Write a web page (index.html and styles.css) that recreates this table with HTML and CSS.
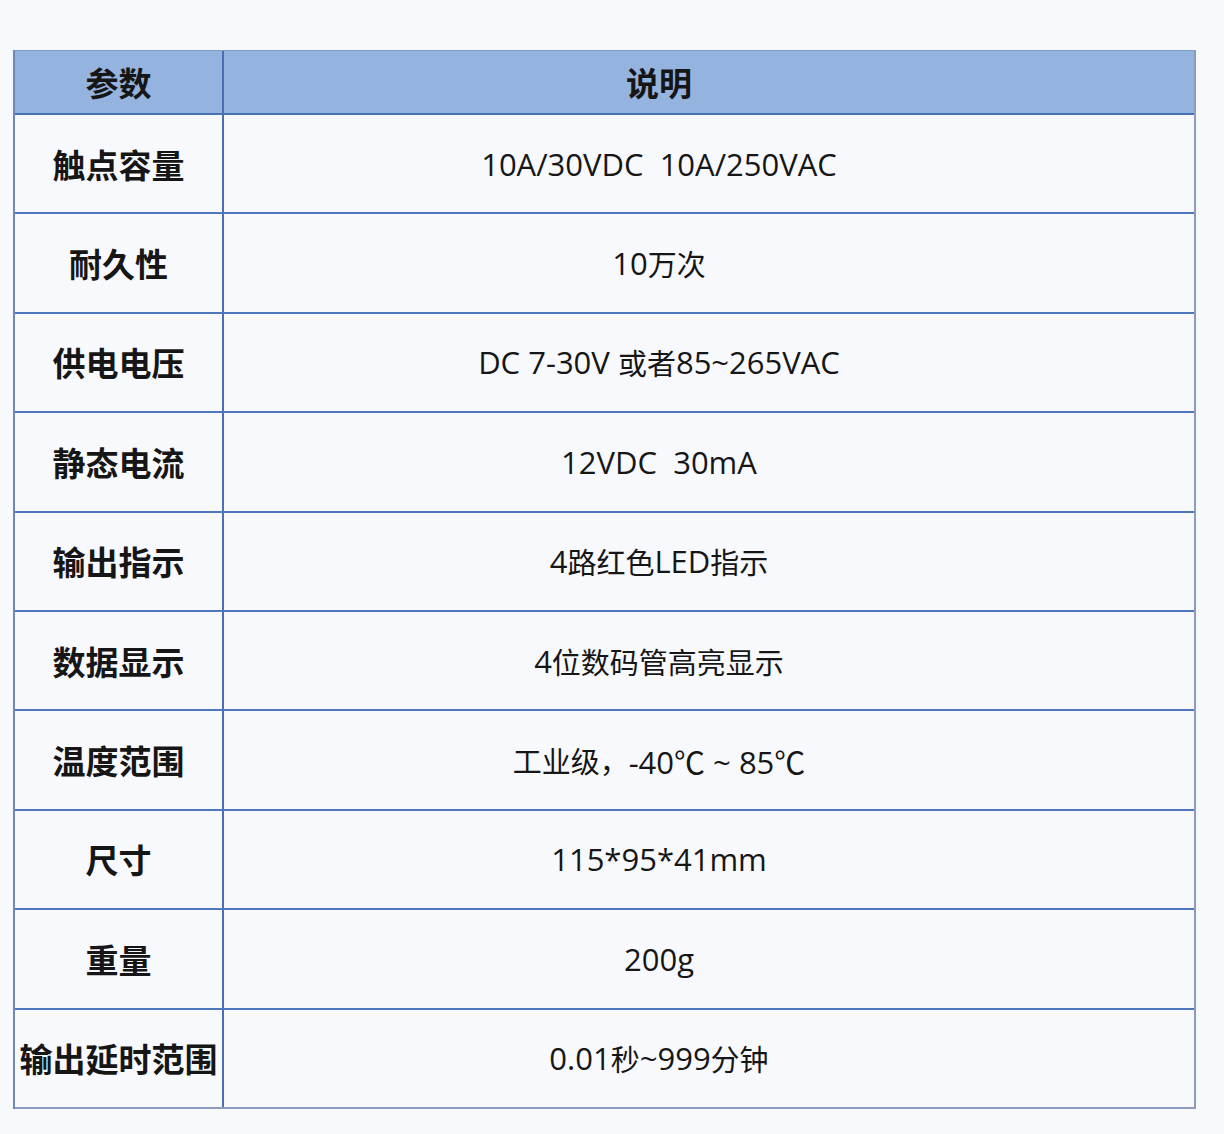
FILE: index.html
```
<!DOCTYPE html>
<html lang="zh-CN">
<head>
<meta charset="utf-8">
<title>参数说明</title>
<link rel="stylesheet" href="styles.css">
</head>
<body>
<div class="spec">
  <div class="row head">
    <div class="cell key">参数</div>
    <div class="cell val">说明</div>
  </div>
  <div class="row"><div class="cell key">触点容量</div><div class="cell val"><span class="lat">10A/30VDC&nbsp;&nbsp;10A/250VAC</span></div></div>
  <div class="row"><div class="cell key">耐久性</div><div class="cell val"><span class="lat">10</span>万次</div></div>
  <div class="row"><div class="cell key">供电电压</div><div class="cell val"><span class="lat">DC 7-30V </span>或者<span class="lat">85~265VAC</span></div></div>
  <div class="row"><div class="cell key">静态电流</div><div class="cell val"><span class="lat">12VDC&nbsp;&nbsp;30mA</span></div></div>
  <div class="row"><div class="cell key">输出指示</div><div class="cell val"><span class="lat">4</span>路红色<span class="lat">LED</span>指示</div></div>
  <div class="row"><div class="cell key">数据显示</div><div class="cell val"><span class="lat">4</span>位数码管高亮显示</div></div>
  <div class="row"><div class="cell key">温度范围</div><div class="cell val">工业级，<span class="lat">-40℃ ~ 85℃</span></div></div>
  <div class="row"><div class="cell key">尺寸</div><div class="cell val"><span class="lat">115*95*41mm</span></div></div>
  <div class="row"><div class="cell key">重量</div><div class="cell val"><span class="lat">200g</span></div></div>
  <div class="row last"><div class="cell key">输出延时范围</div><div class="cell val"><span class="lat">0.01</span>秒<span class="lat">~999</span>分钟</div></div>
</div>
</body>
</html>
```

FILE: styles.css
```
html, body {
  margin: 0;
  padding: 0;
  background: #f8f9fd;
}
body {
  padding: 50px 0 0 13px;
  font-family: "Noto Sans CJK SC", sans-serif;
  color: #161616;
}
.spec {
  width: 1183px;
  border-left: 2px solid #6f88bb;
  border-right: 2px solid #8d9cbc;
  box-sizing: border-box;
}
.row {
  display: grid;
  grid-template-columns: 209px 1fr;
  height: 99.4px;
  box-sizing: border-box;
  border-bottom: 2px solid #4f77bd;
}
.row.head {
  height: 65px;
  background: #94b3df;
  border-top: 1px solid #7d9ed3;
  border-bottom: 2px solid #4a70b5;
}
.row.last {
  border-bottom: 2px solid #8d9cbc;
}
.cell {
  display: flex;
  align-items: center;
  justify-content: center;
  white-space: pre;
}
.key {
  border-right: 2px solid #4a6fb8;
  font-weight: 700;
  font-size: 33px;
}
.head .val {
  font-weight: 700;
  font-size: 33px;
}
.val {
  font-size: 29px;
  padding-right: 100px;
}
.lat {
  font-family: "Open Sans", "Noto Sans CJK SC", sans-serif;
  font-size: 31px;
}
```
